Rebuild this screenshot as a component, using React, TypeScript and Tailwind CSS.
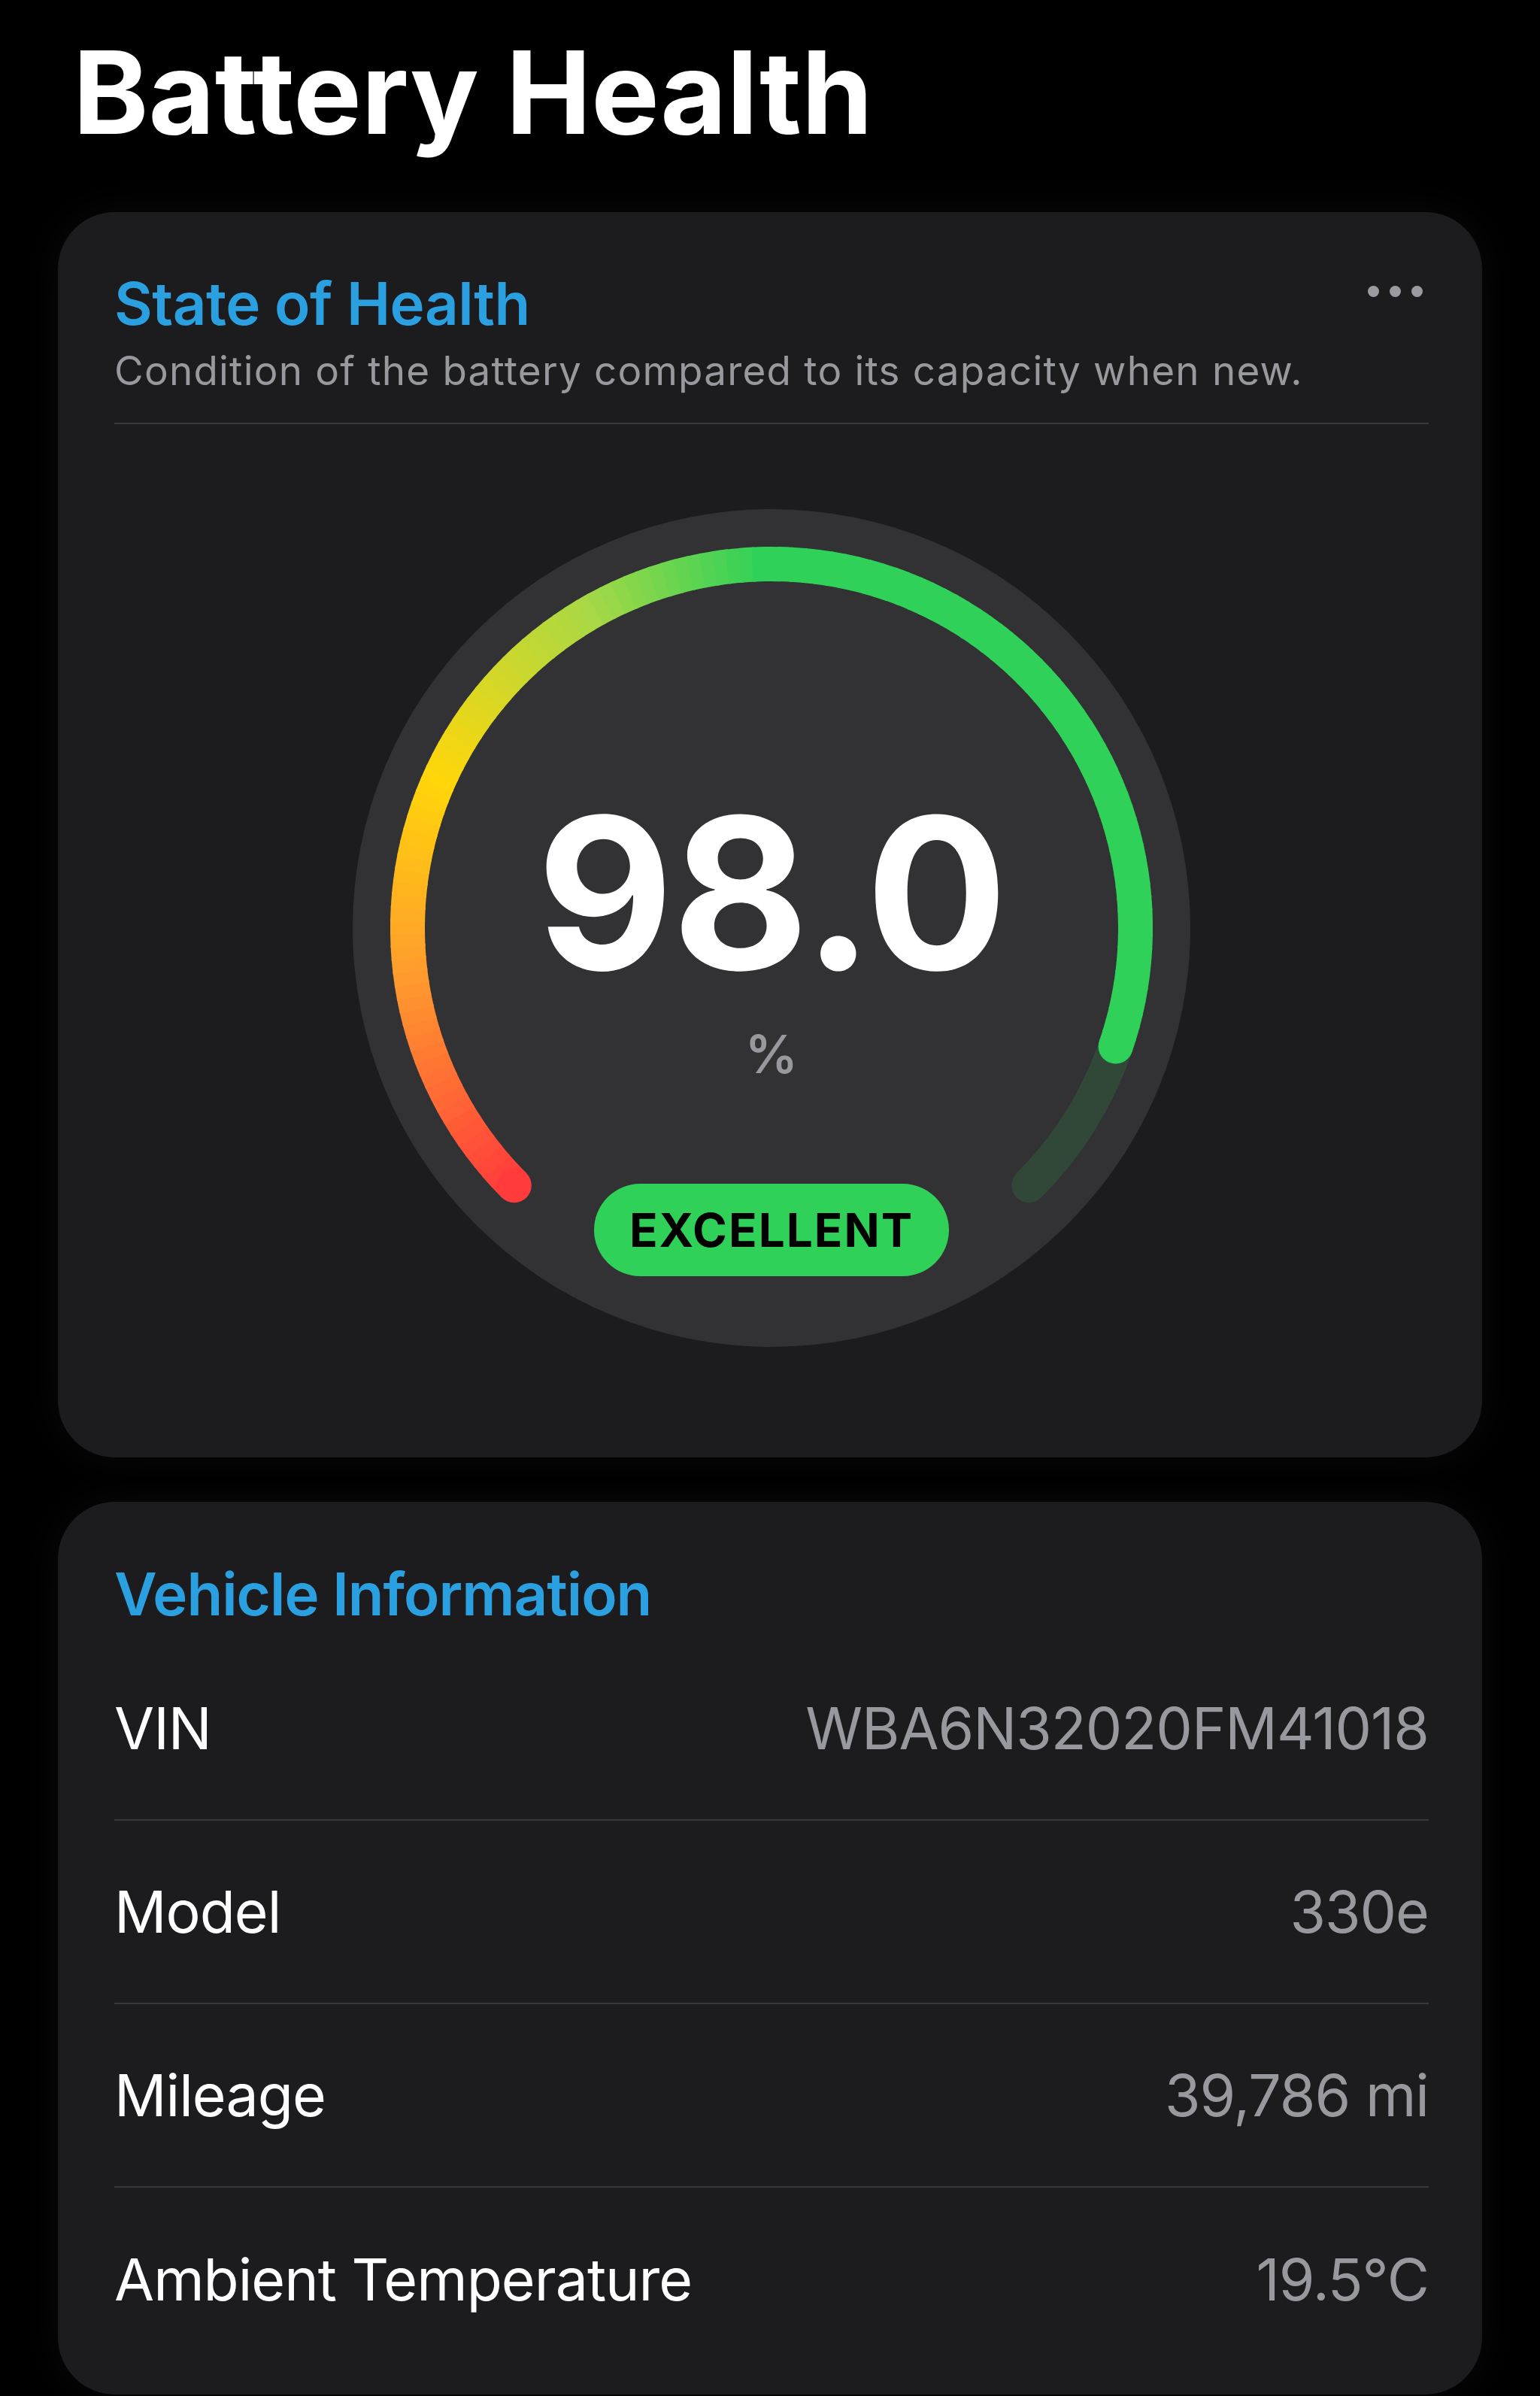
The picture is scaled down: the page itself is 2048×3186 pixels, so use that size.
const CX = 557
const CY = 557
const R = 484

const stops: [number, [number, number, number]][] = [
  [135, [255, 59, 59]],
  [172, [255, 154, 46]],
  [204, [255, 214, 10]],
  [240, [168, 216, 69]],
  [268, [48, 209, 88]],
]

function colorAt(a: number) {
  if (a <= stops[0][0]) return stops[0][1]
  for (let i = 0; i < stops.length - 1; i++) {
    const [a0, c0] = stops[i]
    const [a1, c1] = stops[i + 1]
    if (a >= a0 && a <= a1) {
      const t = (a - a0) / (a1 - a0)
      return c0.map((v, k) => Math.round(v + (c1[k] - v) * t)) as [number, number, number]
    }
  }
  return stops[stops.length - 1][1]
}

function pt(a: number) {
  const rad = (a * Math.PI) / 180
  return [CX + R * Math.cos(rad), CY + R * Math.sin(rad)]
}

function arc(a1: number, a2: number) {
  const [x1, y1] = pt(a1)
  const [x2, y2] = pt(a2)
  const large = a2 - a1 > 180 ? 1 : 0
  return `M ${x1} ${y1} A ${R} ${R} 0 ${large} 1 ${x2} ${y2}`
}

function Gauge() {
  const start = 135
  const end = 405
  const value = 379
  const segs = []
  for (let a = start; a < value; a += 2) {
    const b = Math.min(a + 2.4, value)
    const [r, g, bl] = colorAt(a + 1)
    segs.push(
      <path key={a} d={arc(a, b)} stroke={`rgb(${r},${g},${bl})`} strokeWidth={46} fill="none" />
    )
  }
  const [sx, sy] = pt(start)
  const [vx, vy] = pt(value)
  const [c0r, c0g, c0b] = colorAt(start)

  return (
    <div className="relative mx-auto w-[1114px] h-[1114px] rounded-full bg-[#323235]">
      <svg className="absolute inset-0" width={1114} height={1114} viewBox="0 0 1114 1114">
        <path d={arc(start, end)} stroke="#30d158" strokeOpacity={0.14} strokeWidth={46} fill="none" strokeLinecap="round" />
        {segs}
        <circle cx={sx} cy={sy} r={23} fill={`rgb(${c0r},${c0g},${c0b})`} />
        <circle cx={vx} cy={vy} r={23} fill="#30d158" />
      </svg>
      <div className="absolute left-0 right-0 top-[371px] text-center text-white font-bold text-[280px] leading-[280px] tracking-[-2px]">
        98.0
      </div>
      <div className="absolute left-0 right-0 top-[690px] text-center text-[#98989f] font-semibold text-[70px] leading-[70px]">
        %
      </div>
      <div className="absolute left-1/2 -translate-x-1/2 top-[897px] w-[472px] h-[123px] rounded-full bg-[#30d158] flex items-center justify-center">
        <span className="text-black font-bold text-[62px] leading-none tracking-[2px]">EXCELLENT</span>
      </div>
    </div>
  )
}

const rows = [
  ['VIN', 'WBA6N32020FM41018'],
  ['Model', '330e'],
  ['Mileage', '39,786 mi'],
  ['Ambient Temperature', '19.5°C'],
]

export default function App() {
  return (
    <div className="min-h-screen bg-black font-['Inter','Noto_Sans',sans-serif] px-[77px] pt-[47px] pb-[2px]">
      <h1 className="pl-[20px] text-white font-bold text-[152px] leading-[152px]">Battery Health</h1>

      <section className="mt-[83px] rounded-[76px] bg-[#1c1c1e] pl-[75px] pr-[71px] pt-[83px] pb-[147px] shadow-[0_0_60px_rgba(255,255,255,0.04)]">
        <div className="flex justify-between items-start">
          <h2 className="text-[#2ba0e0] font-semibold text-[78px] leading-[78px] tracking-[-0.5px]">State of Health</h2>
          <div className="mt-[15px] mr-[8px] flex gap-[14px]">
            <span className="w-[15px] h-[15px] rounded-full bg-[#9a9aa0]" />
            <span className="w-[15px] h-[15px] rounded-full bg-[#9a9aa0]" />
            <span className="w-[15px] h-[15px] rounded-full bg-[#9a9aa0]" />
          </div>
        </div>
        <p className="mt-[25px] text-[#98989f] text-[53px] leading-[51px] tracking-[1.2px]">
          Condition of the battery compared to its capacity when new.
        </p>
        <div className="mt-[43px] mb-[113px] h-[2px] bg-[#3a3a3c]" />
        <Gauge />
      </section>

      <section className="mt-[59px] rounded-[76px] bg-[#1c1c1e] pl-[75px] pr-[71px] pt-[84px] pb-[31px] shadow-[0_0_60px_rgba(255,255,255,0.04)]">
        <h2 className="text-[#2ba0e0] font-semibold text-[78px] leading-[78px] tracking-[-1px]">Vehicle Information</h2>
        <div className="mt-[18px]">
          {rows.map(([k, v], i) => (
            <div
              key={k}
              className={`flex items-center justify-between h-[244px] ${i < rows.length - 1 ? 'border-b-2 border-[#38383a]' : ''}`}
            >
              <span className="text-white text-[77px] leading-[77px] tracking-[-1px]">{k}</span>
              <span className="text-[#98989f] text-[77px] leading-[77px] tracking-[-1px]">{v}</span>
            </div>
          ))}
        </div>
      </section>
    </div>
  )
}
